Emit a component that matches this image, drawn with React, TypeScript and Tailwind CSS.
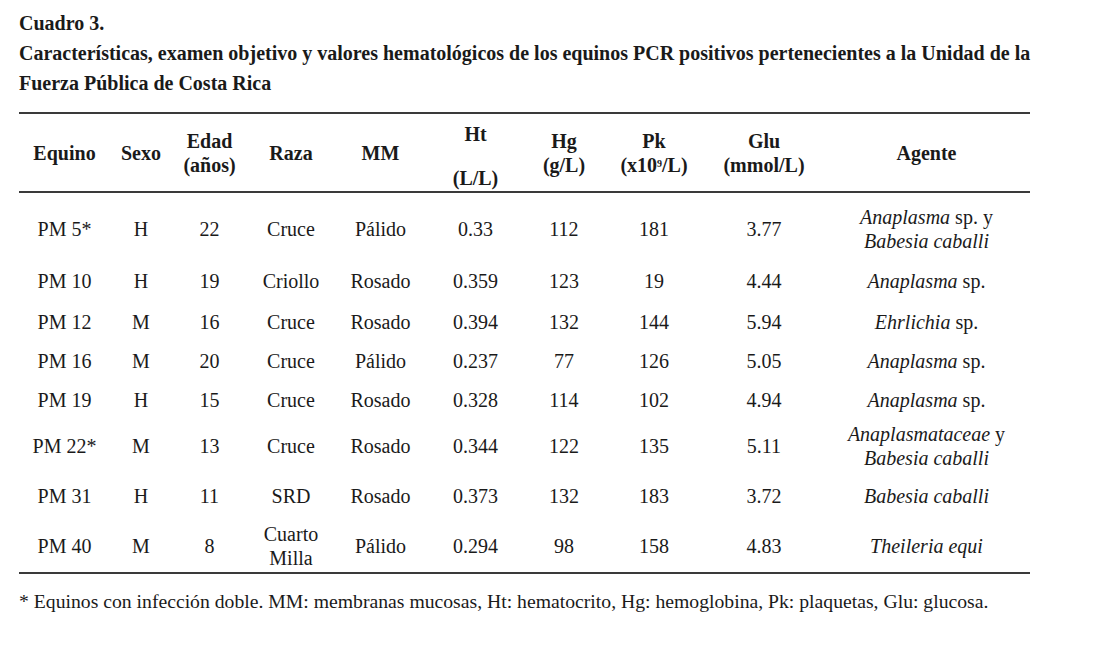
import React from "react";

const cols = "grid grid-cols-[91px_62px_75px_88px_91px_99px_78px_102px_118px_207px]";

type Row = {
  eq: string;
  sx: string;
  ed: string;
  raza: React.ReactNode;
  mm: string;
  ht: string;
  hg: string;
  pk: string;
  glu: string;
  ag: React.ReactNode;
  h: string;
  pt: string;
};

const rows: Row[] = [
  {
    eq: "PM 5*", sx: "H", ed: "22", raza: "Cruce", mm: "Pálido", ht: "0.33", hg: "112", pk: "181", glu: "3.77",
    ag: (<><span><i>Anaplasma</i> sp. y</span><span><i>Babesia caballi</i></span></>),
    h: "h-[62px]", pt: "pt-[10px]",
  },
  { eq: "PM 10", sx: "H", ed: "19", raza: "Criollo", mm: "Rosado", ht: "0.359", hg: "123", pk: "19", glu: "4.44", ag: (<span><i>Anaplasma</i> sp.</span>), h: "h-[47px]", pt: "pt-[5px]" },
  { eq: "PM 12", sx: "M", ed: "16", raza: "Cruce", mm: "Rosado", ht: "0.394", hg: "132", pk: "144", glu: "5.94", ag: (<span><i>Ehrlichia</i> sp.</span>), h: "h-[40px]", pt: "pt-[0px]" },
  { eq: "PM 16", sx: "M", ed: "20", raza: "Cruce", mm: "Pálido", ht: "0.237", hg: "77", pk: "126", glu: "5.05", ag: (<span><i>Anaplasma</i> sp.</span>), h: "h-[37px]", pt: "pt-[0px]" },
  { eq: "PM 19", sx: "H", ed: "15", raza: "Cruce", mm: "Rosado", ht: "0.328", hg: "114", pk: "102", glu: "4.94", ag: (<span><i>Anaplasma</i> sp.</span>), h: "h-[42px]", pt: "pt-[0px]" },
  {
    eq: "PM 22*", sx: "M", ed: "13", raza: "Cruce", mm: "Rosado", ht: "0.344", hg: "122", pk: "135", glu: "5.11",
    ag: (<><span><i>Anaplasmataceae</i> y</span><span><i>Babesia caballi</i></span></>),
    h: "h-[50px]", pt: "pt-[0px]",
  },
  { eq: "PM 31", sx: "H", ed: "11", raza: "SRD", mm: "Rosado", ht: "0.373", hg: "132", pk: "183", glu: "3.72", ag: (<span><i>Babesia caballi</i></span>), h: "h-[49px]", pt: "pt-[0px]" },
  {
    eq: "PM 40", sx: "M", ed: "8", raza: (<><span>Cuarto</span><span>Milla</span></>), mm: "Pálido", ht: "0.294", hg: "98", pk: "158", glu: "4.83",
    ag: (<span><i>Theileria equi</i></span>),
    h: "h-[52px]", pt: "pt-[0px]",
  },
];

function Cell({ children, extra = "" }: { children: React.ReactNode; extra?: string }) {
  return <div className={`flex flex-col items-center justify-center text-center leading-[24px] ${extra}`}>{children}</div>;
}

export default function App() {
  return (
    <div
      className="w-[1094px] h-[646px] bg-white text-[#1a1a1a] pl-[19px] pt-[8px]"
      style={{ fontFamily: '"Liberation Serif", serif' }}
    >
      <div className="font-bold text-[20px] leading-[30px] whitespace-nowrap">
        <div>Cuadro 3.</div>
        <div>Características, examen objetivo y valores hematológicos de los equinos PCR positivos pertenecientes a la Unidad de la</div>
        <div>Fuerza Pública de Costa Rica</div>
      </div>

      <div className="w-[1011px] mt-[14px] text-[20px]">
        {/* header */}
        <div className={`${cols} h-[81px] border-t-2 border-b-2 border-[#3a3a3a] font-bold`}>
          <Cell>Equino</Cell>
          <Cell>Sexo</Cell>
          <Cell><span>Edad</span><span>(años)</span></Cell>
          <Cell>Raza</Cell>
          <Cell>MM</Cell>
          <Cell extra="pt-[6px]"><span>Ht</span><span className="mt-[20px]">(L/L)</span></Cell>
          <Cell><span>Hg</span><span>(g/L)</span></Cell>
          <Cell><span>Pk</span><span>(x10<sup className="text-[10px]">9</sup>/L)</span></Cell>
          <Cell><span>Glu</span><span>(mmol/L)</span></Cell>
          <Cell>Agente</Cell>
        </div>

        {/* body */}
        <div className="border-b-2 border-[#3a3a3a]">
          {rows.map((r) => (
            <div key={r.eq} className={`${cols} ${r.h} ${r.pt}`}>
              <Cell>{r.eq}</Cell>
              <Cell>{r.sx}</Cell>
              <Cell>{r.ed}</Cell>
              <Cell>{r.raza}</Cell>
              <Cell>{r.mm}</Cell>
              <Cell>{r.ht}</Cell>
              <Cell>{r.hg}</Cell>
              <Cell>{r.pk}</Cell>
              <Cell>{r.glu}</Cell>
              <Cell>{r.ag}</Cell>
            </div>
          ))}
        </div>

        <div className="mt-[15px] text-[19.7px] leading-[24px] whitespace-nowrap">
          * Equinos con infección doble. MM: membranas mucosas, Ht: hematocrito, Hg: hemoglobina, Pk: plaquetas, Glu: glucosa.
        </div>
      </div>
    </div>
  );
}
